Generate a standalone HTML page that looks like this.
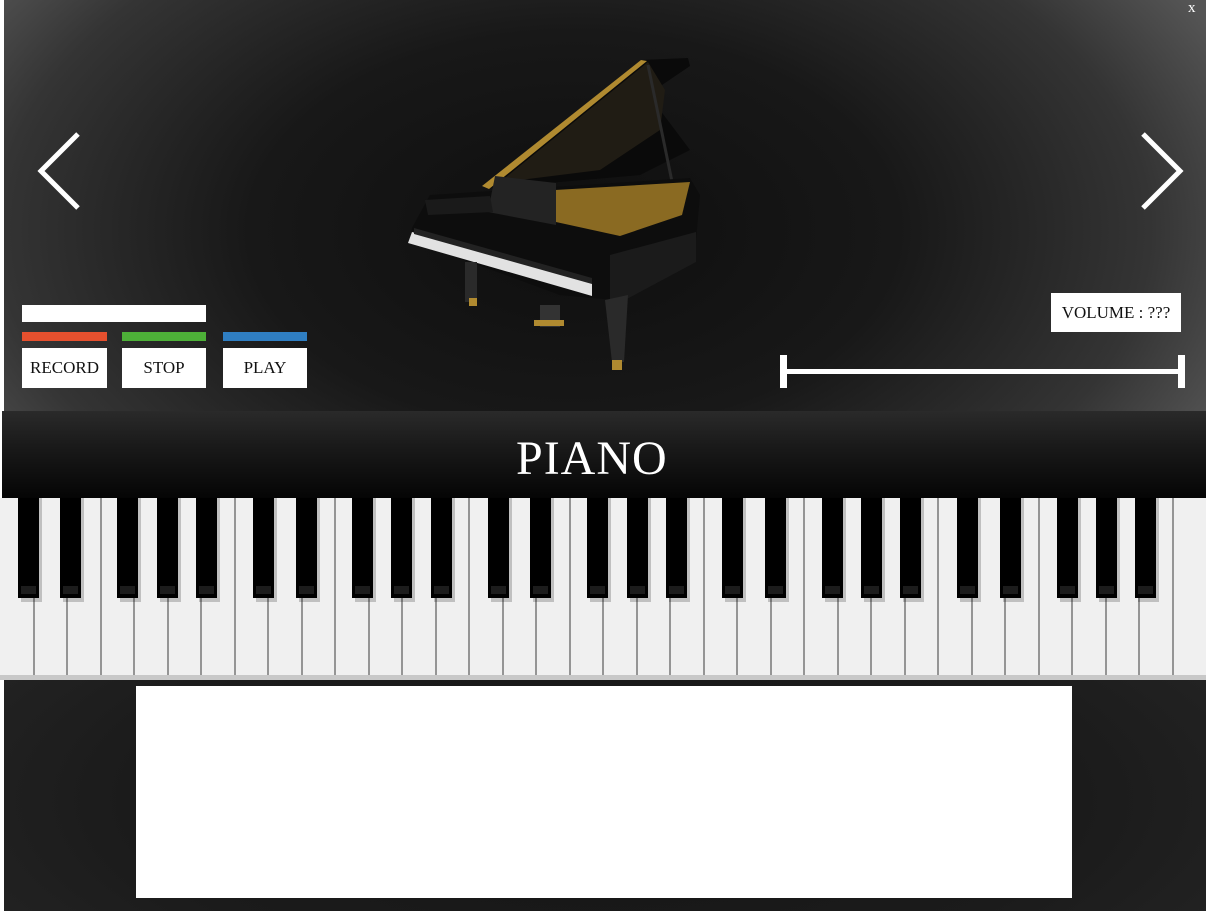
<!DOCTYPE html>
<html><head><meta charset="utf-8"><style>
*{margin:0;padding:0;box-sizing:border-box}
body{width:1210px;height:911px;background:#fff;position:relative;overflow:hidden;font-family:"Liberation Serif",serif}
.top{position:absolute;left:4px;top:0;width:1202px;height:411px;
background:radial-gradient(ellipse 720px 440px at 570px 230px,#0e0e0e 0%,#181818 45%,#343434 80%,#555 100%)}
.hdr{position:absolute;left:2px;top:411px;width:1204px;height:87px;background:linear-gradient(#2a2a2a,#1a1a1a 40%,#050505);}
.hdr span{position:absolute;left:514px;top:20px;font-size:48px;color:#fff;letter-spacing:1px}
.kb{position:absolute;left:0;top:498px;width:1206px;height:177px;background:#f0f0f0}
.bot{position:absolute;left:4px;top:680px;width:1202px;height:231px;background:radial-gradient(ellipse 800px 300px at 600px 120px,#151515,#1b1b1b 60%,#262626)}
.strip{position:absolute;left:0;top:675px;width:1206px;height:5px;background:#c8c8c8}
.box{position:absolute;background:#fff;font-size:17px;color:#111;text-align:center}
.bar{position:absolute;height:9px}
.x{position:absolute;left:1188px;top:0;color:#fff;font-size:15px}
</style></head><body>
<div class="top"></div>
<div class="x">x</div>
<svg style="position:absolute;left:0;top:0" width="1210" height="411">
<polyline points="78,134 41,171 78,208" fill="none" stroke="#fff" stroke-width="5"/>
<polyline points="1143,134 1180,171 1143,208" fill="none" stroke="#fff" stroke-width="5"/>
<!-- lid -->
<polygon points="641,60 688,58 690,66 662,85 660,110 690,150 640,175 560,182 490,188" fill="#0a0a0a"/>
<polygon points="648,62 665,90 660,130 600,170 520,180 495,186" fill="#201c14"/>
<polygon points="641,60 647,61 489,189 482,186" fill="#b08a30"/>
<line x1="648" y1="65" x2="684" y2="240" stroke="#2a2a2a" stroke-width="3"/>
<!-- body -->
<polygon points="430,195 690,178 700,195 696,240 615,300 560,295 410,240 412,228" fill="#0d0d0d"/>
<polygon points="555,190 690,182 682,215 620,236 556,222" fill="#8a6a22"/>
<polygon points="495,176 556,183 556,225 488,212" fill="#232323"/>
<polygon points="425,200 490,196 493,212 428,215" fill="#1a1a1a"/>
<polygon points="610,255 696,232 696,262 610,308" fill="#1b1b1b"/>
<polygon points="412,232 592,282 592,296 408,243" fill="#e2e2e2"/>
<polygon points="414,228 592,278 592,284 414,234" fill="#222"/>
<rect x="465" y="262" width="12" height="40" fill="#2a2a2a"/><rect x="469" y="298" width="8" height="8" fill="#b08a30"/>
<polygon points="605,300 628,295 624,362 612,362" fill="#2a2a2a"/><rect x="612" y="360" width="10" height="10" fill="#b08a30"/>
<rect x="540" y="305" width="20" height="22" fill="#333"/><rect x="534" y="320" width="30" height="6" fill="#b08a30"/>
<rect x="782" y="369" width="401" height="5" fill="#fff"/>
<rect x="780" y="355" width="7" height="33" fill="#fff"/><rect x="1178" y="355" width="7" height="33" fill="#fff"/>
</svg>
<div class="box" style="left:22px;top:305px;width:184px;height:17px"></div>
<div class="bar" style="left:22px;top:332px;width:85px;background:#e6502e"></div>
<div class="bar" style="left:122px;top:332px;width:84px;background:#4db038"></div>
<div class="bar" style="left:223px;top:332px;width:84px;background:#2f7ec2"></div>
<div class="box" style="left:22px;top:348px;width:85px;height:40px;line-height:40px">RECORD</div>
<div class="box" style="left:122px;top:348px;width:84px;height:40px;line-height:40px">STOP</div>
<div class="box" style="left:223px;top:348px;width:84px;height:40px;line-height:40px">PLAY</div>
<div class="box" style="left:1051px;top:293px;width:130px;height:39px;line-height:39px">VOLUME : ???</div>
<div class="hdr"><span>PIANO</span></div>
<div class="kb">
<svg width="1206" height="177" style="position:absolute;left:0;top:0">
<g stroke="#777" stroke-width="1.5" id="wl"></g>
<g id="bk"></g>
</svg>
</div>
<div class="strip"></div>
<div class="bot"></div>
<div class="box" style="left:136px;top:686px;width:936px;height:212px"></div>
<script>
var wl=document.getElementById('wl'),bk=document.getElementById('bk'),s='';
for(var i=1;i<36;i++){var x=Math.round(i*33.5);s+='<line x1="'+x+'" y1="0" x2="'+x+'" y2="177"/>';}
wl.innerHTML=s;s='';
[18,60,117,157,196,253,296,352,391,431,488,530,587,627,666,722,765,822,861,900,957,1000,1057,1096,1135].forEach(function(x){
s+='<rect x="'+(x+3)+'" y="0" width="21" height="104" fill="rgba(0,0,0,0.2)"/><rect x="'+x+'" y="0" width="21" height="100" fill="#000"/><rect x="'+(x+3)+'" y="88" width="15" height="8" fill="#1c1c1c"/>';});
bk.innerHTML=s;
</script>
</body></html>
